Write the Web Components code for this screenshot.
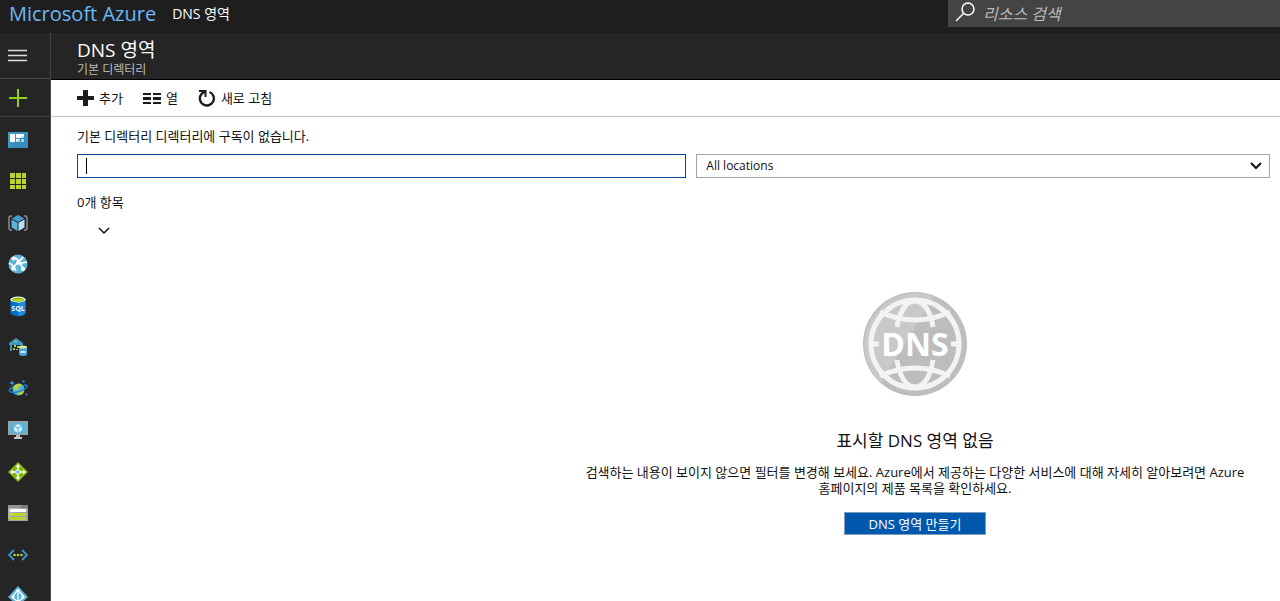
<!DOCTYPE html>
<html lang="ko">
<head>
<meta charset="utf-8">
<title>DNS 영역 - Microsoft Azure</title>
<style>
  html, body {
    margin: 0;
    height: 100%;
    overflow: hidden;
    background: #fff;
    color: #111;
    font-family: "Open Sans", "Noto Sans CJK KR", sans-serif;
    font-size: 13px;
    line-height: 16px;
  }
</style>
</head>
<body>
<azure-portal>
  <top-bar slot="top" brand="Microsoft Azure" crumb="DNS 영역"></top-bar>
  <side-nav slot="nav"></side-nav>
  <resource-blade heading="DNS 영역" subtitle="기본 디렉터리">
    <tool-button slot="tools" icon="add">추가</tool-button>
    <tool-button slot="tools" icon="columns">열</tool-button>
    <tool-button slot="tools" icon="refresh">새로 고침</tool-button>
    <filter-row></filter-row>
    <empty-state>
      <span slot="title">표시할 DNS 영역 없음</span>
      검색하는 내용이 보이지 않으면 필터를 변경해 보세요. Azure에서 제공하는 다양한 서비스에 대해 자세히 알아보려면 Azure 홈페이지의 제품 목록을 확인하세요.
      <span slot="action">DNS 영역 만들기</span>
    </empty-state>
  </resource-blade>
</azure-portal>

<script>
const icons = {
  add: '<svg width="17" height="18" viewBox="0 0 17 18"><path d="M6 1h5v6h6v4h-6v6H6v-6H0V7h6z" fill="#1d1d1d"/></svg>',
  columns: '<svg width="18" height="18" viewBox="0 0 18 18"><path d="M0 4h8v2H0zM10 4h8v2h-8zM0 8h8v3H0zM10 8h8v3h-8zM0 13h8v2H0zM10 13h8v2h-8z" fill="#1d1d1d"/></svg>',
  refresh: '<svg width="18" height="18" viewBox="0 0 18 18"><path d="M11.500 3A7 7 0 1 1 3.500 5l3-2.500" fill="none" stroke="#1d1d1d" stroke-width="2.400"/><path d="M1 2h6.500v6" fill="none" stroke="#1d1d1d" stroke-width="2"/></svg>',
  dashboard: '<svg viewBox="0 0 20 20"><path d="M0 2h20v16H0z" fill="#3999c6"/><path d="M2 4h5v8H2zM8 4h8v4H8zM8 9h4v3H8zM13 9h3v3h-3z" fill="#fff"/><path d="M0 18 20 2v16z" fill="#267fae" opacity=".35"/></svg>',
  grid: '<svg viewBox="0 0 20 20"><path d="M2 2h5v5H2zM8 2h5v5H8zM14 2h4v5h-4zM2 8h5v5H2zM8 8h5v5H8zM14 8h4v5h-4zM2 14h5v4H2zM8 14h5v4H8zM14 14h4v4h-4z" fill="#b8d432"/></svg>',
  group: '<svg viewBox="0 0 20 20"><path d="M4 3H3C1.500 3 1 4 1 5v10c0 1 .5 2 2 2h1M16 3h1c1.500 0 2 1 2 2v10c0 1-.5 2-2 2h-1" fill="none" stroke="#8c8c8c" stroke-width="1.500"/><path d="m10 2 6.500 3.500L10 9 3.500 5.500z" fill="#3c9bd0"/><path d="m3.500 6.500 6 3.300V18l-6-3.500z" fill="#59b4d9"/><path d="m16.500 6.500-6 3.300V18l6-3.500z" fill="#b3e1f5"/></svg>',
  web: '<svg viewBox="0 0 20 20"><circle cx="10" cy="10" r="9.500" fill="#59b4d9"/><path d="M5 4c5 0 7 4 10 11M15 3c-2 4-7 5-10 12M1 9c3 1 5 3 7 8M10 9c3 0 6 0 9-1" fill="none" stroke="#fff" stroke-width="1.800"/><circle cx="5.500" cy="4.500" r="2" fill="#fff"/><circle cx="10" cy="9" r="2" fill="#fff"/><circle cx="15" cy="15" r="2" fill="#fff"/><circle cx="5" cy="14.500" r="2" fill="#fff"/></svg>',
  sql: '<svg viewBox="0 0 20 20"><path d="M2.500 4v12.500c0 2 3.500 3.500 7.500 3.500s7.500-1.500 7.500-3.500V4z" fill="#0072c6"/><path d="M10 4h7.500v12.500c0 2-3.500 3.500-7.500 3.500z" fill="#1f8ad8"/><ellipse cx="10" cy="3.500" rx="7.500" ry="3" fill="#fff"/><ellipse cx="10" cy="3.700" rx="6" ry="2.100" fill="#7fba00"/><ellipse cx="10" cy="4.300" rx="4.500" ry="1.300" fill="#b8d432"/><text x="10" y="15" text-anchor="middle" font-size="7" font-weight="bold" fill="#fff">SQL</text></svg>',
  warehouse: '<svg viewBox="0 0 20 20"><path d="M1 6 8 1l7 5v2H1z" fill="#3999c6"/><path d="M2 7h2v7H2zM12 7h2v3h-2z" fill="#3999c6"/><path d="M4 8h8v6H4z" fill="#1c1c1c"/><path d="M6 4h3v1H6zM6 8h2v2H6zM9 9h2v2H9zM5 11h2v2H5zM8 12h2v1H8z" fill="#b8d432"/><path d="M11 10v7c0 1.500 2 2 4 2s4-.5 4-2v-7z" fill="#4aa3d6"/><ellipse cx="15" cy="10" rx="4" ry="1.500" fill="#d7e992"/><path d="M12.500 14h5v2h-5z" fill="#c8e8f7"/></svg>',
  cosmos: '<svg viewBox="0 0 20 20"><circle cx="10.500" cy="10.500" r="6" fill="#59b4d9"/><path d="M5 9c2-5 8-5 9-3-1 2-4 1-4 4 0 2-3 2-5-1zM11 12c2-2 4-2 5 0-1 3-3 4-5 4-1-1-1-3 0-4z" fill="#b8d432"/><path d="M5 8C-1 11 1 14 7 13.500s14-5.500 12-7c-1-.8-3-.3-4 .2" fill="none" stroke="#1b7fd3" stroke-width="1.400"/><path d="m4 1 .8 2.200L7 4l-2.200.8L4 7l-.8-2.200L1 4l2.200-.8z" fill="#3b9cf0"/><circle cx="15.500" cy="2.500" r="1.300" fill="#1b7fd3"/><circle cx="18.500" cy="15.500" r="1" fill="#3b9cf0"/></svg>',
  vm: '<svg viewBox="0 0 20 20"><path d="M0 1h20v14H0z" fill="#a0a1a2"/><path d="M1.500 2.500h17v11h-17z" fill="#59b4d9"/><path d="M8 15h4v2h2v2H6v-2h2z" fill="#b4b5b6"/><path d="M6 17h8v1.500H6z" fill="#d0d0d0"/><path d="m10 4 4 2v4.500L10 13l-4-2.500V6z" fill="#d8f0fa"/><path d="m6 6 4 2 4-2M10 8v5" fill="none" stroke="#59b4d9"/></svg>',
  balancer: '<svg viewBox="0 0 20 20"><path d="m10 0 10 10-10 10L0 10z" fill="#7fba00"/><path d="M10 4v12M4 10h12" stroke="#fff" stroke-width="1.500"/><path d="m10 2 2.500 3h-5zM10 18l2.500-3h-5zM2 10l3-2.500v5zM18 10l-3-2.500v5z" fill="#fff"/><circle cx="10" cy="10" r="2.200" fill="#59b4d9" stroke="#fff"/></svg>',
  storage: '<svg viewBox="0 0 20 20"><path d="M0 2h20v16H0z" fill="#a0a1a2"/><path d="M0 2h20v3H0z" fill="#7a7a7a"/><path d="M2 6h16v3H2z" fill="#fff"/><path d="M2 10h16v3H2zM2 14h16v3H2z" fill="#b8d432"/><path d="M0 2h15L0 16z" fill="#fff" opacity=".2"/></svg>',
  vnet: '<svg viewBox="0 0 20 20"><path d="M6 5 1 10l5 5M14 5l5 5-5 5" fill="none" stroke="#3999c6" stroke-width="1.800"/><circle cx="6.500" cy="10" r="1.300" fill="#b8d432"/><circle cx="10" cy="10" r="1.300" fill="#b8d432"/><circle cx="13.500" cy="10" r="1.300" fill="#b8d432"/></svg>',
  directory: '<svg viewBox="0 0 20 20"><path d="m10 0 10 11-10 9L0 11z" fill="#59b4d9"/><path d="M10 3v13M10 4l-6 7M10 4l6 7M4 11l6 5 6-5" fill="none" stroke="#fff" stroke-width="1.200"/><circle cx="10" cy="4.500" r="1.600" fill="#fff"/><circle cx="5" cy="11" r="1.600" fill="#fff"/><circle cx="15" cy="11" r="1.600" fill="#fff"/><circle cx="10" cy="15.500" r="1.600" fill="#fff"/></svg>',
  chevron: '<svg width="12" height="8" viewBox="0 0 12 8"><path d="m1 1 5 5 5-5" fill="none" stroke="currentColor" stroke-width="var(--chevron-weight, 1.500)"/></svg>'
}

/**
 * Attaches an open shadow root holding the given markup.
 *
 * @param {HTMLElement} host - The element to render into.
 * @param {string} markup - Styles and markup.
 * @returns {ShadowRoot} The shadow root.
 */
function render (host, markup) {
  const template = document.createElement('template')
  template.innerHTML = markup
  const root = host.attachShadow({ mode: 'open' })
  root.appendChild(template.content.cloneNode(true))
  return root
}

customElements.define('azure-portal', class extends HTMLElement {
  constructor () {
    super()
    render(this, `
      <style>
        :host {
          display: grid;
          grid-template: auto 1fr / auto 1fr;
          height: 100vh;
          overflow: hidden;
        }
        header { grid-column: 1 / -1; }
        nav, main { min-width: 0; min-height: 0; overflow: hidden; }
      </style>
      <header><slot name="top"></slot></header>
      <nav><slot name="nav"></slot></nav>
      <main><slot></slot></main>
    `)
  }
})

customElements.define('top-bar', class extends HTMLElement {
  connectedCallback () {
    render(this, `
      <style>
        :host {
          display: flex;
          align-items: flex-start;
          height: 33px;
          background: #1e1e1e;
          color: #fff;
        }
        .brand {
          margin-left: 9px;
          color: #6cb8f8;
          font-size: 20px;
          line-height: 27px;
          text-decoration: none;
        }
        .crumb { margin-left: 16px; font-size: 14px; line-height: 27px; }
        .search {
          display: flex;
          align-items: center;
          gap: 8px;
          box-sizing: border-box;
          width: 332px;
          height: 27px;
          margin-left: auto;
          padding-left: 7px;
          background: #444;
        }
        input {
          flex: 1;
          min-width: 0;
          border: 0;
          padding: 0;
          outline: 0;
          background: none;
          color: #fff;
          font: italic 16px "Open Sans", "Noto Sans CJK KR", sans-serif;
        }
        input::placeholder { color: #bbb; opacity: 1; }
        svg { margin-top: -3px; }
      </style>
      <a class="brand" href="#">${this.getAttribute('brand')}</a>
      <span class="crumb">${this.getAttribute('crumb')}</span>
      <label class="search">
        <svg width="20" height="20" viewBox="0 0 20 20" fill="none" stroke="#fff" stroke-width="1.500"><circle cx="13" cy="7" r="6"/><path d="M8.500 11.500 1 19"/></svg>
        <input type="text" placeholder="리소스 검색" aria-label="리소스 검색">
      </label>
    `)
  }
})

customElements.define('side-nav', class extends HTMLElement {
  constructor () {
    super()
    const names = ['dashboard', 'grid', 'group', 'web', 'sql', 'warehouse', 'cosmos', 'vm', 'balancer', 'storage', 'vnet', 'directory']
    render(this, `
      <style>
        :host {
          display: block;
          box-sizing: border-box;
          width: 51px;
          height: 100%;
          border-right: 1px solid #444;
          background: #252525;
        }
        button, a {
          display: flex;
          align-items: center;
          box-sizing: border-box;
          width: 100%;
          padding: 0 0 0 8px;
        }
        button {
          border: 0;
          border-bottom: 1px solid #444;
          background: none;
        }
        .menu { height: 46px; }
        .new { height: 38px; }
        ul { margin: 0; padding: 2px 0 0; list-style: none; }
        a { height: 41px; }
        li:nth-child(even) a { height: 42px; }
        a svg { width: 20px; height: 20px; }
      </style>
      <button class="menu" aria-label="메뉴"><svg width="20" height="14" viewBox="0 0 20 14"><path d="M0 1.500h19M0 6.500h19M0 11.500h19" stroke="#ddd" stroke-width="1.300"/></svg></button>
      <button class="new" aria-label="새로 만들기"><svg width="20" height="20" viewBox="0 0 20 20"><path d="M10 1v18M1 10h18" stroke="#8fd11f" stroke-width="2"/></svg></button>
      <ul>${names.map(name => `<li><a href="#${name}" aria-label="${name}">${icons[name]}</a></li>`).join('')}</ul>
    `)
  }
})

customElements.define('tool-button', class extends HTMLElement {
  connectedCallback () {
    render(this, `
      <style>
        :host { display: block; }
        button {
          display: flex;
          align-items: center;
          gap: 5px;
          padding: 0;
          border: 0;
          background: none;
          color: inherit;
          font: inherit;
          cursor: pointer;
        }
      </style>
      <button>${icons[this.getAttribute('icon')]}<slot></slot></button>
    `)
  }
})

customElements.define('resource-blade', class extends HTMLElement {
  connectedCallback () {
    render(this, `
      <style>
        :host { display: block; }
        header {
          box-sizing: border-box;
          height: 47px;
          padding: 5px 26px 0;
          border-bottom: 1px solid #000;
          background: #252525;
          color: #fff;
        }
        h1 { margin: 0; font-size: 19px; font-weight: 400; line-height: 24px; }
        p { margin: 0; color: #bbb; font-size: 12px; line-height: 16px; }
        .tools {
          display: flex;
          gap: 20px;
          align-items: center;
          height: 36px;
          padding: 0 26px;
          border-bottom: 1px solid #c4c4c4;
        }
        /* The blade is wider than the window and pans sideways */
        .content { box-sizing: border-box; width: 135vw; padding: 11px 26px; }
      </style>
      <header>
        <h1>${this.getAttribute('heading')}</h1>
        <p>${this.getAttribute('subtitle')}</p>
      </header>
      <div class="tools"><slot name="tools"></slot></div>
      <div class="content"><slot></slot></div>
    `)
  }
})

customElements.define('filter-row', class extends HTMLElement {
  constructor () {
    super()
    render(this, `
      <style>
        :host { display: block; }
        p { margin: 0; }
        .filters {
          display: grid;
          grid-template-columns: 85fr 80fr 66fr;
          gap: 10px;
          margin: 10px 0 16px;
        }
        .field { position: relative; display: block; }
        input, select {
          display: block;
          box-sizing: border-box;
          width: 100%;
          height: 24px;
          padding: 0 9px;
          border: 1px solid #a6a6a6;
          border-radius: 0;
          outline: 0;
          appearance: none;
          background: #fff;
          color: inherit;
          font: inherit;
          font-size: 12px;
        }
        input { border-color: #00489a; }
        .caret {
          position: absolute;
          top: 4px;
          left: 9px;
          width: 1px;
          height: 16px;
          background: #000;
        }
        .field svg {
          position: absolute;
          top: 8px;
          right: 8px;
          pointer-events: none;
          --chevron-weight: 2;
        }
        .sort { display: block; margin: 17px 0 0 21px; padding: 0; border: 0; background: none; color: #111; line-height: 0; }
      </style>
      <p>기본 디렉터리 디렉터리에 구독이 없습니다.</p>
      <div class="filters">
        <label class="field"><input type="text" aria-label="이름으로 필터링"><span class="caret"></span></label>
        <label class="field"><select aria-label="위치"><option>All locations</option></select>${icons.chevron}</label>
        <label class="field"><select aria-label="그룹화"></select>${icons.chevron}</label>
      </div>
      <p>0개 항목</p>
      <button class="sort" aria-label="정렬">${icons.chevron}</button>
    `)
  }
})

customElements.define('empty-state', class extends HTMLElement {
  constructor () {
    super()
    render(this, `
      <style>
        :host {
          display: flex;
          flex-direction: column;
          align-items: center;
          margin-top: 57px;
          text-align: center;
          word-break: keep-all;
        }
        h2 { margin: 35px 0 0; font-size: 17px; font-weight: 400; line-height: 20px; }
        p { max-width: 700px; margin: 13px 0 16px; }
        button {
          height: 23px;
          padding: 0 24px;
          border: 1px solid #7d9dbd;
          background: #0058ad;
          color: #fff;
          font: inherit;
        }
      </style>
      <svg width="104" height="104" viewBox="0 0 104 104">
        <circle cx="52" cy="52" r="52" fill="#bdbdbd"/>
        <path d="M18 91A52 52 0 0 1 71 4z" fill="#c9c9c9"/>
        <g fill="none" stroke="#f3f3f3" stroke-width="5">
          <circle cx="52" cy="52" r="44"/>
          <path d="M17 20q35 16 70 0M17 84q35-16 70 0"/>
          <path d="M34 35C36 22 42 9 52 9s16 13 18 26M34 68c2 14 8 27 18 27s16-13 18-27"/>
          <path d="M8 52h8M88 52h8"/>
        </g>
        <text x="52" y="64" text-anchor="middle" font-size="32" font-weight="700" fill="#fff">DNS</text>
      </svg>
      <h2><slot name="title"></slot></h2>
      <p><slot></slot></p>
      <button><slot name="action"></slot></button>
    `)
  }
})
</script>
</body>
</html>
